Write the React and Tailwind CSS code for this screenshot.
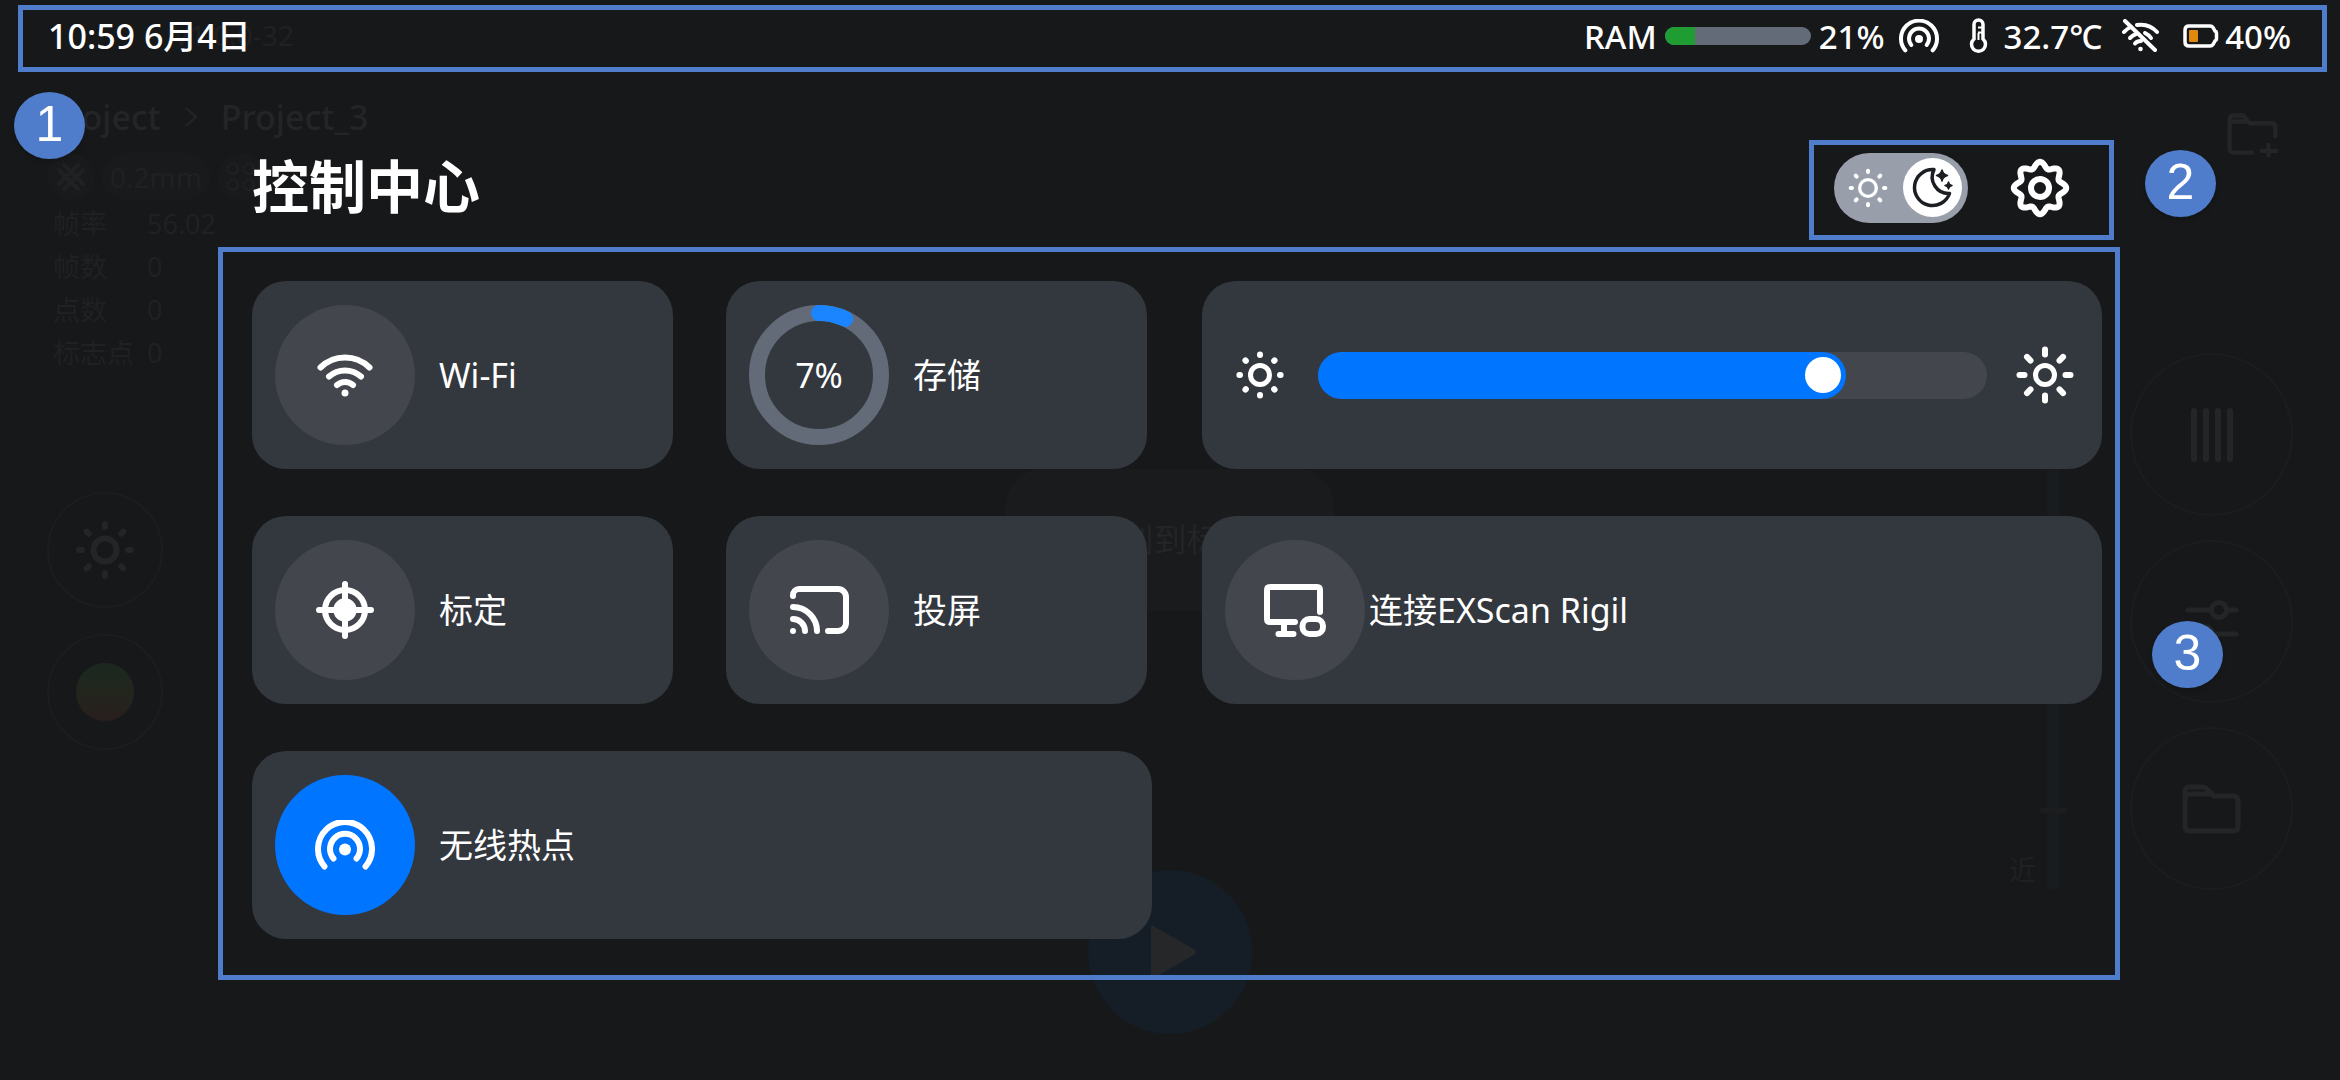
import React, { useState } from 'react';

const polar = (cx, cy, r, deg) => {
  const a = (deg * Math.PI) / 180;
  return [cx + r * Math.cos(a), cy + r * Math.sin(a)];
};

const gearPath = () => {
  const points = [];
  for (let deg = 0; deg < 360; deg += 3) {
    const r = 23.2 + 3 * Math.cos((8 * deg * Math.PI) / 180);
    points.push(polar(30, 30, r, deg).map((n) => n.toFixed(2)).join(' '));
  }
  return `M${points.join('L')}Z`;
};

const Sun = ({ r, from, to, ring = 5, ray = 6, className }) => (
  <svg viewBox="0 0 60 60" fill="none" stroke="currentColor" strokeLinecap="round" className={className}>
    <circle cx="30" cy="30" r={r} strokeWidth={ring} />
    {[0, 45, 90, 135, 180, 225, 270, 315].map((deg) => {
      const [x1, y1] = polar(30, 30, from, deg);
      const [x2, y2] = polar(30, 30, to, deg);
      return <line key={deg} x1={x1} y1={y1} x2={x2} y2={y2} strokeWidth={ray} />;
    })}
  </svg>
);

const Moon = () => (
  <svg viewBox="0 0 59 59" className="h-full w-full">
    <path d="M31 11.6A18 18 0 1 0 46.5 35.5A16.5 16.5 0 0 1 31 11.6Z" fill="none" stroke="#1b1e22" strokeWidth="3.5" strokeLinejoin="round" />
    <path d="M39 12Q40 16.5 44.5 17.5Q40 18.5 39 23Q38 18.5 33.5 17.5Q38 16.5 39 12Z" fill="#1b1e22" stroke="#1b1e22" strokeWidth="1.5" strokeLinejoin="round" />
    <path d="M45.5 24Q46 27 49 27.5Q46 28 45.5 31Q45 28 42 27.5Q45 27 45.5 24Z" fill="#1b1e22" stroke="#1b1e22" strokeWidth="1.5" strokeLinejoin="round" />
  </svg>
);

const Gear = () => (
  <svg viewBox="0 0 60 60" fill="none" stroke="currentColor" strokeWidth="6" className="h-[60px] w-[60px]">
    <path d={gearPath()} strokeLinejoin="round" />
    <circle cx="30" cy="30" r="9" />
  </svg>
);

const Wifi = () => (
  <svg viewBox="0 0 56 43" fill="none" stroke="currentColor" strokeWidth="6" strokeLinecap="round" className="h-[43px] w-[56px]">
    <path d="M3.5 13.5A35 35 0 0 1 52.5 13.5" />
    <path d="M12 22.5A24 24 0 0 1 44 22.5" />
    <path d="M20 31A12 12 0 0 1 36 31" />
    <circle cx="28" cy="39" r="3.5" fill="currentColor" stroke="none" />
  </svg>
);

const Target = () => (
  <svg viewBox="0 0 58 58" fill="none" stroke="currentColor" strokeWidth="6" strokeLinecap="round" className="h-[58px] w-[58px]">
    <circle cx="29" cy="29" r="20" />
    <circle cx="29" cy="29" r="11.7" fill="currentColor" stroke="none" />
    <path d="M29 3V55M3 29H55" />
  </svg>
);

const Cast = () => (
  <svg viewBox="0 0 59 48" fill="none" stroke="currentColor" strokeWidth="6" strokeLinecap="round" className="h-[48px] w-[59px]">
    <path d="M3 10V9A6 6 0 0 1 9 3H48A8 8 0 0 1 56 11V37A8 8 0 0 1 48 45H38" />
    <path d="M3 21A24 24 0 0 1 27 45" />
    <path d="M3 33A12 12 0 0 1 15 45" />
    <circle cx="3" cy="45" r="3" fill="currentColor" stroke="none" />
  </svg>
);

const Computer = () => (
  <svg viewBox="0 0 62 53" fill="none" stroke="currentColor" strokeWidth="6" strokeLinecap="round" strokeLinejoin="round" className="h-[53px] w-[62px]">
    <path d="M31 38H6Q3 38 3 35V6Q3 3 6 3H53Q56 3 56 6V28" />
    <path d="M20 38V50M14.5 50H29.5" />
    <rect x="38.5" y="35" width="20.5" height="15" rx="7" />
  </svg>
);

const Hotspot = ({ className }) => (
  <svg viewBox="0 0 60 50" fill="none" stroke="currentColor" strokeWidth="6" strokeLinecap="round" className={className}>
    <path d="M9.5 46.5A27 27 0 1 1 50.5 46.5" />
    <path d="M18.5 38.5A15 15 0 1 1 41.5 38.5" />
    <circle cx="30" cy="29.5" r="6" fill="currentColor" stroke="none" />
  </svg>
);

const Thermometer = () => (
  <svg viewBox="0 0 19 36" fill="none" stroke="currentColor" strokeWidth="3.5" className="h-[36px] w-[19px]">
    <path d="M5 6.5A4.5 4.5 0 0 1 14 6.5V21A7 7 0 1 1 5 21Z" />
    <path d="M9 9.5H13M9 14.5H13M9.5 15V22" strokeWidth="2" />
  </svg>
);

const WifiOff = () => (
  <svg viewBox="0 0 37 34" fill="none" stroke="currentColor" strokeWidth="4" strokeLinecap="round" className="h-[34px] w-[37px]">
    <path d="M3 2L33 31" />
    <path d="M2 13Q5 9.5 9 8M15 6Q27 4 35 13" />
    <path d="M8 19Q11 16 14 15M23 14Q27 16 29 19" />
    <path d="M13 24.5Q15 22 19 22" />
    <circle cx="18.5" cy="30" r="2.3" fill="currentColor" stroke="none" />
  </svg>
);

const Battery = () => (
  <svg viewBox="0 0 36 24" className="h-[24px] w-[36px]">
    <path d="M6 2H27Q29 2 30 3.5L32 7Q33.5 7.5 33.5 9V15Q33.5 16.5 32 17L30 20.5Q29 22 27 22H6Q2 22 2 18V6Q2 2 6 2Z" fill="none" stroke="white" strokeWidth="3.5" />
    <rect x="6" y="6" width="9" height="12" rx="1" fill="#de8a0c" />
  </svg>
);

const Folder = ({ plus, className }) => (
  <svg viewBox="0 0 59 50" fill="none" stroke="currentColor" strokeWidth="5" strokeLinejoin="round" strokeLinecap="round" className={className}>
    {plus ? (
      <path d="M29 46H8Q3 46 3 41V8Q3 3 8 3H19L26 12H51Q56 12 56 17V27M3 13Q3 10 8 10H24M48 37V49M40 44H57" />
    ) : (
      <path d="M3 13V8Q3 3 8 3H20Q23 3 25 5L32 12H51Q56 12 56 17V42Q56 47 51 47H8Q3 47 3 42V14Q3 10 8 10H28" />
    )}
  </svg>
);

const StorageRing = ({ percent }) => (
  <span className="relative flex h-[140px] w-[140px] items-center justify-center">
    <svg viewBox="0 0 140 140" fill="none" strokeWidth="16" className="absolute inset-0">
      <circle cx="70" cy="70" r="62" stroke="#636b78" />
      <circle cx="70" cy="70" r="62" stroke="#1a85ff" strokeLinecap="round" pathLength="100" strokeDasharray={`${percent} 100`} transform="rotate(-90 70 70)" />
    </svg>
    <span className="relative">{percent}%</span>
  </span>
);

const Tile = ({ label, active, tight, bare, children }) => (
  <button type="button" className={`flex h-[188px] w-full items-center rounded-[34px] bg-[#33373e] px-[23px] text-left ${tight ? 'gap-1' : 'gap-6'}`}>
    {bare ? children : (
      <span className={`flex h-[140px] w-[140px] shrink-0 items-center justify-center rounded-full ${active ? 'bg-[#0075ff]' : 'bg-[#43464d]'}`}>
        {children}
      </span>
    )}
    <span>{label}</span>
  </button>
);

const Brightness = () => {
  const [value, setValue] = useState(77);

  return (
    <div className="flex h-[188px] items-center gap-7 rounded-[34px] bg-[#33373e] pr-[27px] pl-[28px]">
      <Sun r={9.5} from={20} to={20.6} className="h-[60px] w-[60px] shrink-0" />
      <div className="relative h-[47px] flex-1 rounded-full bg-[#43464d]">
        <div className="h-full rounded-full bg-[#0075ff]" style={{ width: `calc((100% - 36px) * ${value / 100} + 41px)` }} />
        <input
          type="range"
          aria-label="亮度"
          min="0"
          max="100"
          value={value}
          onChange={(e) => setValue(Number(e.target.value))}
          className="absolute inset-0 h-full w-full appearance-none bg-transparent [&::-webkit-slider-thumb]:h-9 [&::-webkit-slider-thumb]:w-9 [&::-webkit-slider-thumb]:appearance-none [&::-webkit-slider-thumb]:rounded-full [&::-webkit-slider-thumb]:bg-white"
        />
      </div>
      <Sun r={9.5} from={20.5} to={25.5} className="h-[60px] w-[60px] shrink-0" />
    </div>
  );
};

const Badge = ({ className, children }) => (
  <span className={`absolute flex h-[67px] w-[71px] items-center justify-center rounded-[50%] bg-[#4f7dcc] pb-1 font-['Liberation_Sans',sans-serif] text-[50px] leading-none text-white shadow-md ${className}`}>
    {children}
  </span>
);

const stats = [
  ['帧率', '56.02'],
  ['帧数', '0'],
  ['点数', '0'],
  ['标志点', '0'],
];

// Dimmed scan page that stays visible under the control centre
const ScanPage = () => (
  <div className="flex min-h-screen flex-col text-[#232527]">
    <div className="flex h-[70px] items-center pl-[173px] text-[28px] text-[#1f2123]">V1.0.0-32</div>
    <div className="grid flex-1 grid-cols-[1fr_auto_1fr]">
      <div className="flex flex-col items-start pt-6 pl-[47px]">
        <div className="flex h-[46px] items-center text-[34px] font-medium">
          <span>Project</span>
          <svg viewBox="0 0 14 20" fill="none" stroke="currentColor" strokeWidth="2" className="mx-[23px] h-5 w-[14px]">
            <path d="M2 1L12 10L2 19" />
          </svg>
          <span>Project_3</span>
        </div>
        <div className="mt-[13px] flex gap-2 text-[28px] text-[#1f2123]">
          <span className="flex h-[47px] w-[47px] items-center justify-center rounded-full bg-[#191a1c]">
            <svg viewBox="0 0 28 28" stroke="currentColor" strokeWidth="4" strokeLinecap="round" className="h-7 w-7">
              <path d="M2 7L21 26M7 2L26 21M2 21L21 2M7 26L26 7" />
            </svg>
          </span>
          <span className="flex h-[47px] items-center rounded-full bg-[#191a1c] px-[8px]">0.2mm</span>
          <span className="flex h-[47px] w-[47px] items-center justify-center rounded-full bg-[#191a1c]">
            <svg viewBox="0 0 30 30" fill="none" stroke="currentColor" strokeWidth="2" className="h-[30px] w-[30px]">
              <circle cx="7" cy="7" r="5" />
              <circle cx="23" cy="7" r="5" />
              <circle cx="7" cy="23" r="5" />
              <circle cx="23" cy="23" r="5" />
            </svg>
          </span>
        </div>
        <dl className="mt-[3px] pl-[6px] text-[27px] text-[#1f2123]">
          {stats.map(([name, value]) => (
            <div key={name} className="flex h-[43px] items-center">
              <dt className="w-[94px]">{name}</dt>
              <dd>{value}</dd>
            </div>
          ))}
        </dl>
        <div className="mt-[117px] flex flex-col gap-[26px]">
          <span className="flex h-[116px] w-[116px] items-center justify-center rounded-full border-2 border-[#1b1d1f]">
            <Sun r={11.5} from={23} to={26} ring={6} className="h-[60px] w-[60px]" />
          </span>
          <span className="flex h-[116px] w-[116px] items-center justify-center rounded-full border-2 border-[#1b1d1f]">
            <span className="h-[58px] w-[58px] rounded-full bg-linear-to-b from-[#1a2820] via-[#22261d] to-[#291e1e]" />
          </span>
        </div>
      </div>

      <div className="flex flex-col items-center gap-[259px] pt-[399px]">
        <div className="flex h-[142px] w-[328px] items-center justify-center rounded-[36px] bg-[#1a1b1c] text-[33px]">未识别到标志点</div>
        <div className="flex h-[164px] w-[164px] items-center justify-center rounded-full bg-[#151d26]">
          <svg viewBox="0 0 46 54" fill="#262728" className="ml-[8px] h-[54px] w-[46px]">
            <path d="M0 3Q0 -1 4 2L43 24Q47 27 43 30L4 52Q0 55 0 51Z" />
          </svg>
        </div>
      </div>

      <div className="flex flex-col items-end pt-[40px] pr-[47px]">
        <Folder plus className="mr-[15px] h-[49px] w-[51px]" />
        <div className="mt-[141px] flex gap-[71px]">
          <div className="flex h-[590px] items-end gap-[11px] text-[27px] text-[#1f2123]">
            <span>近</span>
            <div className="flex h-full w-[12px] flex-col items-center justify-end rounded-full bg-[#191c1e] pb-[77px]">
              <span className="h-[5px] w-[29px] shrink-0 rounded-full bg-[#1b1d1e]" />
            </div>
          </div>
          <div className="flex flex-col gap-6 pt-[53px]">
            <span className="flex h-[163px] w-[163px] items-center justify-center rounded-full border-2 border-[#1b1d1f]">
              <svg viewBox="0 0 42 54" stroke="currentColor" strokeWidth="6" strokeLinecap="round" className="h-[54px] w-[42px]">
                <path d="M3 3V51M15 3V51M27 3V51M39 3V51" />
              </svg>
            </span>
            <span className="flex h-[163px] w-[163px] items-center justify-center rounded-full border-2 border-[#1b1d1f]">
              <svg viewBox="0 0 54 48" fill="none" stroke="currentColor" strokeWidth="5" strokeLinecap="round" className="h-[48px] w-[54px]">
                <path d="M3 12H25M43 12H51M3 36H11M29 36H51" />
                <circle cx="34" cy="12" r="7.5" />
                <circle cx="20" cy="36" r="7.5" />
              </svg>
            </span>
            <span className="flex h-[163px] w-[163px] items-center justify-center rounded-full border-2 border-[#1b1d1f]">
              <Folder className="h-[50px] w-[59px]" />
            </span>
          </div>
        </div>
      </div>
    </div>
  </div>
);

const StatusBar = () => (
  <header className="mt-[5px] mr-[13px] ml-[18px] flex h-[67px] items-center justify-between border-[5px] border-[#4f7dcc] pr-[31px] pb-[5px] pl-[25px] leading-none font-medium">
    <span className="text-[34px]">10:59 6月4日</span>
    <div className="flex items-center text-[33px]">
      <span>RAM</span>
      <span className="ml-2 h-[18px] w-[146px] overflow-hidden rounded-full bg-[#636b78]">
        <span className="block h-full w-[21%] bg-[#1f9d33]" />
      </span>
      <span className="ml-2">21%</span>
      <Hotspot className="ml-[14px] h-[34px] w-[40px]" />
      <span className="ml-[30px]"><Thermometer /></span>
      <span className="ml-4">32.7℃</span>
      <span className="ml-5"><WifiOff /></span>
      <span className="ml-6"><Battery /></span>
      <span className="ml-1.5">40%</span>
    </div>
  </header>
);

export default function App() {
  const [dark, setDark] = useState(true);

  return (
    <div className="relative min-h-screen overflow-hidden bg-[#17181a] font-['Noto_Sans','Noto_Sans_CJK_SC',sans-serif] text-white">
      <ScanPage />

      {/* Control centre overlay */}
      <div className="absolute inset-0 flex flex-col">
        <StatusBar />

        <div className="mt-[68px] mr-[226px] ml-[252px] flex items-center justify-between">
          <h1 className="pb-2 text-[57px] leading-none font-bold">控制中心</h1>
          <div className="flex h-[100px] items-center gap-[42px] border-[5px] border-[#4f7dcc] pr-[39px] pb-[5px] pl-5">
            <button
              type="button"
              role="switch"
              aria-checked={dark}
              aria-label="深色模式"
              onClick={() => setDark(!dark)}
              className="flex h-[70px] w-[134px] items-center justify-between rounded-full bg-[#989faa] pr-[6px] pl-[14px]"
            >
              <Sun r={12.5} from={24} to={26} ring={5} ray={6} className="h-10 w-10" />
              <span className="h-[59px] w-[59px] rounded-full bg-white"><Moon /></span>
            </button>
            <button type="button" aria-label="设置"><Gear /></button>
          </div>
        </div>

        <section className="mt-[7px] mr-[220px] ml-[218px] border-[5px] border-[#4f7dcc] pt-[29px] pr-[13px] pb-[36px] pl-[29px] text-[34px]">
          <div className="grid grid-cols-2 gap-x-[50px] gap-y-[47px]">
            <div className="grid grid-cols-2 gap-[53px] pr-[5px]">
              <Tile label="Wi-Fi"><Wifi /></Tile>
              <Tile label="存储" bare><StorageRing percent={7} /></Tile>
            </div>
            <Brightness />
            <div className="grid grid-cols-2 gap-[53px] pr-[5px]">
              <Tile label="标定"><Target /></Tile>
              <Tile label="投屏"><Cast /></Tile>
            </div>
            <Tile label="连接EXScan Rigil" tight><Computer /></Tile>
            <Tile label="无线热点" active><Hotspot className="h-[50px] w-[60px]" /></Tile>
          </div>
        </section>
      </div>

      <Badge className="top-[92px] left-[14px]">1</Badge>
      <Badge className="top-[150px] right-[124px]">2</Badge>
      <Badge className="top-[621px] right-[117px]">3</Badge>
    </div>
  );
}
